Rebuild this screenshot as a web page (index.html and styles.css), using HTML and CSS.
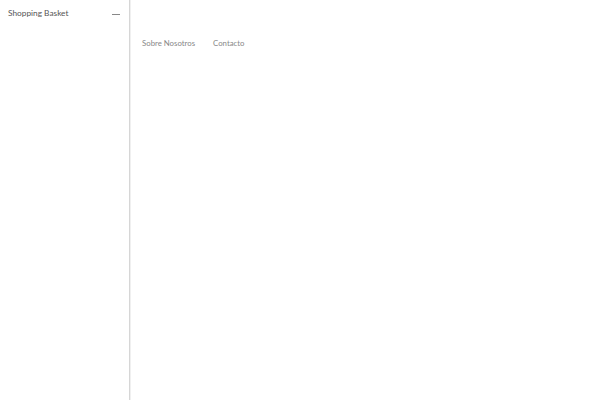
FILE: index.html
```html
<!DOCTYPE html>
<html>
<head>
<meta charset="utf-8">
<link rel="stylesheet" href="styles.css">
</head>
<body>
<div class="layout">
  <aside class="sidebar">
    <div class="basket-head">
      <span class="basket-title">Shopping Basket</span>
      <span class="minus"></span>
    </div>
  </aside>
  <main class="main">
    <nav class="nav">
      <a class="nav-link">Sobre Nosotros</a>
      <a class="nav-link">Contacto</a>
    </nav>
  </main>
</div>
</body>
</html>
```
FILE: styles.css
```css
html, body { margin: 0; padding: 0; height: 100%; background: #fff; }
body { font-family: Lato, "Liberation Sans", sans-serif; color: #555; }
.layout { display: flex; height: 400px; }
.sidebar { width: 129px; border-right: 1px solid #d6d6d6; box-shadow: 1px 0 0 #f0f0f0; flex-shrink: 0; }
.basket-head { display: flex; align-items: center; justify-content: space-between; padding: 8px 9px 0 8px; height: 11px; }
.basket-title { font-size: 8.3px; color: #555; line-height: 11px; }
.minus { width: 8px; height: 1px; background: #888; margin-top: 1px; }
.main { flex: 1; }
.nav { display: flex; gap: 18px; padding: 38px 0 0 12px; }
.nav-link { font-size: 7.8px; color: #888; line-height: 11px; }
```
